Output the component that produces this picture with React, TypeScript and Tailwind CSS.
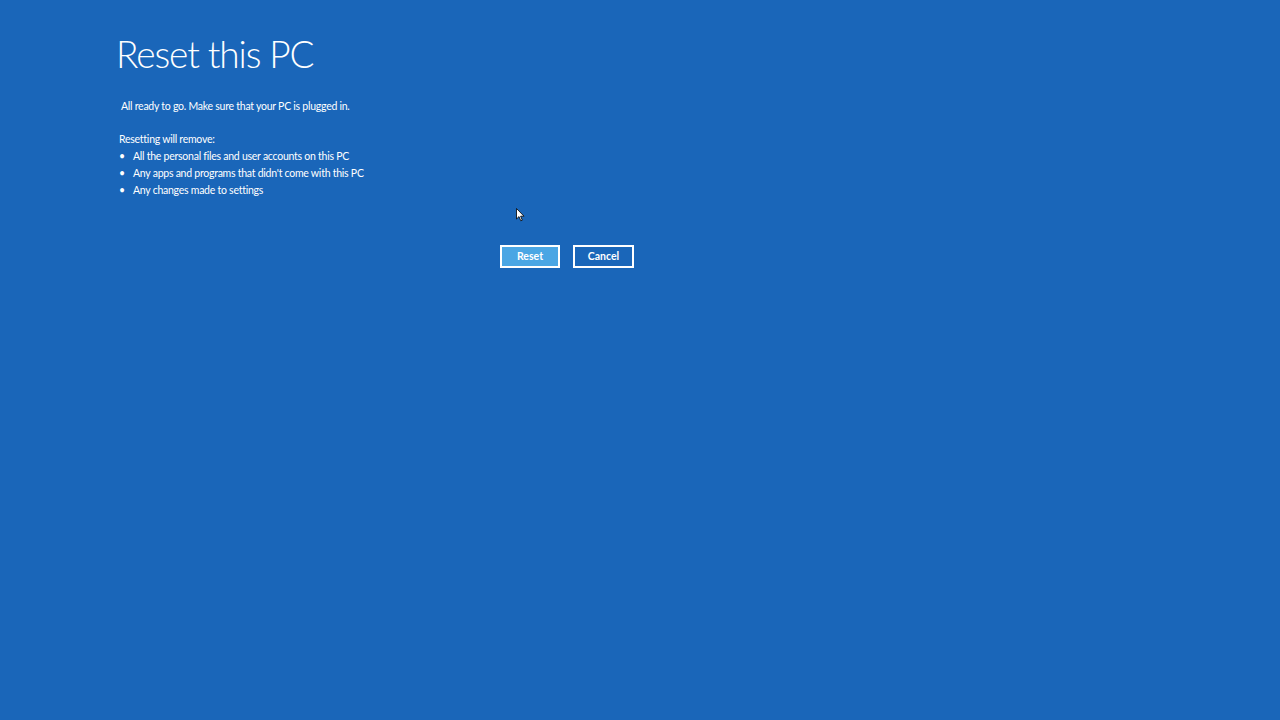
export default function App() {
  return (
    <div className="relative h-[720px] w-[1280px] overflow-hidden bg-[#1a66b9] text-white" style={{ fontFamily: 'Lato, "Open Sans", sans-serif' }}>
      <div className="pl-[116px] pt-[30px]">
        <h1 className="text-[37px] font-light leading-[48px] tracking-[-1.1px]">Reset this PC</h1>
        <div className="text-[10.5px] leading-[14px] tracking-[-0.25px]">
          <p className="mt-[21px] pl-[5px]">All ready to go. Make sure that your PC is plugged in.</p>
          <p className="mt-[19px] pl-[3px]">Resetting will remove:</p>
          <ul className="mt-[3px] flex flex-col gap-[3px] pl-[3px]">
            <li className="flex gap-[9px]"><span className="w-[5px]">•</span>All the personal files and user accounts on this PC</li>
            <li className="flex gap-[9px]"><span className="w-[5px]">•</span>Any apps and programs that didn't come with this PC</li>
            <li className="flex gap-[9px]"><span className="w-[5px]">•</span>Any changes made to settings</li>
          </ul>
        </div>
      </div>
      <div className="mt-[48px] flex gap-[13px] pl-[500px]">
        <button className="h-[23px] w-[60px] border-2 border-white bg-[#4aa6e4] text-[10.5px] font-bold">Reset</button>
        <button className="h-[23px] w-[61px] border-2 border-white bg-[#1a66b9] text-[10.5px] font-bold">Cancel</button>
      </div>
      <svg className="absolute left-[516px] top-[208px]" width="9" height="14" viewBox="0 0 9 14">
        <path d="M0.5 0.5 L0.5 11 L3 8.6 L4.8 12.8 L6.3 12.2 L4.6 8.2 L8 8.2 Z" fill="white" stroke="black" strokeWidth="0.8" />
      </svg>
    </div>
  );
}
